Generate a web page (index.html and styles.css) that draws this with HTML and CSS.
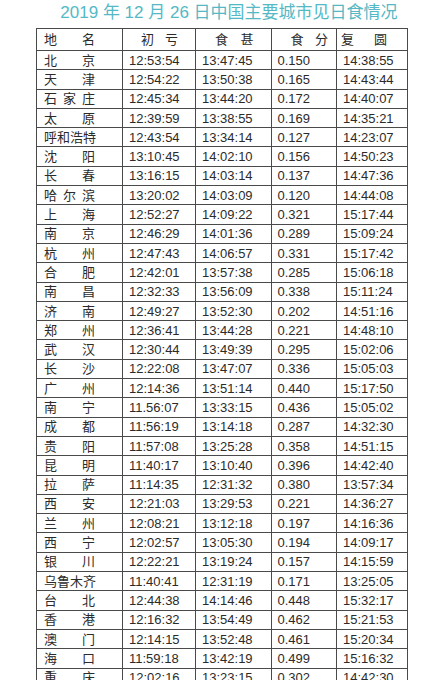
FILE: index.html
```html
<!DOCTYPE html>
<html lang="zh-CN">
<head>
<meta charset="utf-8">
<title>2019年12月26日中国主要城市见日食情况</title>
<link rel="stylesheet" href="styles.css">
</head>
<body>
<h1 class="title">2019 年 12 月 26 日中国主要城市见日食情况</h1>
<table class="eclipse">
<colgroup>
<col class="c-city">
<col class="c-t1">
<col class="c-t2">
<col class="c-mag">
<col class="c-t3">
</colgroup>
<thead>
<tr>
<th class="h-city"><span class="sp"><span>地</span><span>名</span></span></th>
<th class="h-c1"><span class="sp"><span>初</span><span>亏</span></span></th>
<th class="h-c2"><span class="sp"><span>食</span><span>甚</span></span></th>
<th class="h-c3"><span class="sp"><span>食</span><span>分</span></span></th>
<th class="h-c4"><span class="sp"><span>复</span><span>圆</span></span></th>
</tr>
</thead>
<tbody>
<tr><td class="city"><span class="sp"><span>北</span><span>京</span></span></td><td>12:53:54</td><td>13:47:45</td><td>0.150</td><td>14:38:55</td></tr>
<tr><td class="city"><span class="sp"><span>天</span><span>津</span></span></td><td>12:54:22</td><td>13:50:38</td><td>0.165</td><td>14:43:44</td></tr>
<tr><td class="city"><span class="sp"><span>石</span><span>家</span><span>庄</span></span></td><td>12:45:34</td><td>13:44:20</td><td>0.172</td><td>14:40:07</td></tr>
<tr><td class="city"><span class="sp"><span>太</span><span>原</span></span></td><td>12:39:59</td><td>13:38:55</td><td>0.169</td><td>14:35:21</td></tr>
<tr><td class="city"><span class="sp"><span>呼</span><span>和</span><span>浩</span><span>特</span></span></td><td>12:43:54</td><td>13:34:14</td><td>0.127</td><td>14:23:07</td></tr>
<tr><td class="city"><span class="sp"><span>沈</span><span>阳</span></span></td><td>13:10:45</td><td>14:02:10</td><td>0.156</td><td>14:50:23</td></tr>
<tr><td class="city"><span class="sp"><span>长</span><span>春</span></span></td><td>13:16:15</td><td>14:03:14</td><td>0.137</td><td>14:47:36</td></tr>
<tr><td class="city"><span class="sp"><span>哈</span><span>尔</span><span>滨</span></span></td><td>13:20:02</td><td>14:03:09</td><td>0.120</td><td>14:44:08</td></tr>
<tr><td class="city"><span class="sp"><span>上</span><span>海</span></span></td><td>12:52:27</td><td>14:09:22</td><td>0.321</td><td>15:17:44</td></tr>
<tr><td class="city"><span class="sp"><span>南</span><span>京</span></span></td><td>12:46:29</td><td>14:01:36</td><td>0.289</td><td>15:09:24</td></tr>
<tr><td class="city"><span class="sp"><span>杭</span><span>州</span></span></td><td>12:47:43</td><td>14:06:57</td><td>0.331</td><td>15:17:42</td></tr>
<tr><td class="city"><span class="sp"><span>合</span><span>肥</span></span></td><td>12:42:01</td><td>13:57:38</td><td>0.285</td><td>15:06:18</td></tr>
<tr><td class="city"><span class="sp"><span>南</span><span>昌</span></span></td><td>12:32:33</td><td>13:56:09</td><td>0.338</td><td>15:11:24</td></tr>
<tr><td class="city"><span class="sp"><span>济</span><span>南</span></span></td><td>12:49:27</td><td>13:52:30</td><td>0.202</td><td>14:51:16</td></tr>
<tr><td class="city"><span class="sp"><span>郑</span><span>州</span></span></td><td>12:36:41</td><td>13:44:28</td><td>0.221</td><td>14:48:10</td></tr>
<tr><td class="city"><span class="sp"><span>武</span><span>汉</span></span></td><td>12:30:44</td><td>13:49:39</td><td>0.295</td><td>15:02:06</td></tr>
<tr><td class="city"><span class="sp"><span>长</span><span>沙</span></span></td><td>12:22:08</td><td>13:47:07</td><td>0.336</td><td>15:05:03</td></tr>
<tr><td class="city"><span class="sp"><span>广</span><span>州</span></span></td><td>12:14:36</td><td>13:51:14</td><td>0.440</td><td>15:17:50</td></tr>
<tr><td class="city"><span class="sp"><span>南</span><span>宁</span></span></td><td>11.56:07</td><td>13:33:15</td><td>0.436</td><td>15:05:02</td></tr>
<tr><td class="city"><span class="sp"><span>成</span><span>都</span></span></td><td>11:56:19</td><td>13:14:18</td><td>0.287</td><td>14:32:30</td></tr>
<tr><td class="city"><span class="sp"><span>贵</span><span>阳</span></span></td><td>11:57:08</td><td>13:25:28</td><td>0.358</td><td>14:51:15</td></tr>
<tr><td class="city"><span class="sp"><span>昆</span><span>明</span></span></td><td>11:40:17</td><td>13:10:40</td><td>0.396</td><td>14:42:40</td></tr>
<tr><td class="city"><span class="sp"><span>拉</span><span>萨</span></span></td><td>11:14:35</td><td>12:31:32</td><td>0.380</td><td>13:57:34</td></tr>
<tr><td class="city"><span class="sp"><span>西</span><span>安</span></span></td><td>12:21:03</td><td>13:29:53</td><td>0.221</td><td>14:36:27</td></tr>
<tr><td class="city"><span class="sp"><span>兰</span><span>州</span></span></td><td>12:08:21</td><td>13:12:18</td><td>0.197</td><td>14:16:36</td></tr>
<tr><td class="city"><span class="sp"><span>西</span><span>宁</span></span></td><td>12:02:57</td><td>13:05:30</td><td>0.194</td><td>14:09:17</td></tr>
<tr><td class="city"><span class="sp"><span>银</span><span>川</span></span></td><td>12:22:21</td><td>13:19:24</td><td>0.157</td><td>14:15:59</td></tr>
<tr><td class="city"><span class="sp"><span>乌</span><span>鲁</span><span>木</span><span>齐</span></span></td><td>11:40:41</td><td>12:31:19</td><td>0.171</td><td>13:25:05</td></tr>
<tr><td class="city"><span class="sp"><span>台</span><span>北</span></span></td><td>12:44:38</td><td>14:14:46</td><td>0.448</td><td>15:32:17</td></tr>
<tr><td class="city"><span class="sp"><span>香</span><span>港</span></span></td><td>12:16:32</td><td>13:54:49</td><td>0.462</td><td>15:21:53</td></tr>
<tr><td class="city"><span class="sp"><span>澳</span><span>门</span></span></td><td>12:14:15</td><td>13:52:48</td><td>0.461</td><td>15:20:34</td></tr>
<tr><td class="city"><span class="sp"><span>海</span><span>口</span></span></td><td>11:59:18</td><td>13:42:19</td><td>0.499</td><td>15:16:32</td></tr>
<tr><td class="city"><span class="sp"><span>重</span><span>庆</span></span></td><td>12:02:16</td><td>13:23:15</td><td>0.302</td><td>14:42:30</td></tr>
</tbody>
</table>
</body>
</html>
```

FILE: styles.css
```css
html, body {
  margin: 0;
  padding: 0;
  background: #ffffff;
}

body {
  font-family: "Liberation Sans", "Noto Sans CJK SC", sans-serif;
  color: #2b2b2b;
}

.title {
  margin: 0;
  height: 28px;
  padding-left: 18px;
  font-family: "Liberation Sans", "Noto Sans CJK SC", sans-serif;
  font-size: 17px;
  font-weight: 400;
  line-height: 25px;
  text-align: center;
  color: #55b9c5;
  white-space: nowrap;
}

.eclipse {
  margin-left: 36px;
  width: 371px;
  border-collapse: collapse;
  table-layout: fixed;
  font-size: 13px;
}

.c-city { width: 86px; }
.c-t1 { width: 73px; }
.c-t2 { width: 75.5px; }
.c-mag { width: 65.5px; }
.c-t3 { width: 71px; }

.eclipse th,
.eclipse td {
  border: 1px solid #4a4a4a;
  padding: 0 0 0 6px;
  text-align: left;
  font-weight: 400;
  white-space: nowrap;
  line-height: 15px;
  overflow: hidden;
}

.eclipse th {
  height: 21px;
}

.eclipse td {
  height: 18.3px;
}

.sp {
  display: flex;
  justify-content: space-between;
}

.eclipse td.city {
  padding-left: 7px;
}

.eclipse td.city .sp {
  width: 51px;
}

.eclipse th.h-city { padding: 0 27px 0 7px; }
.eclipse th.h-c1 { padding: 0 17px 0 18px; }
.eclipse th.h-c2 { padding: 0 17px 0 19px; }
.eclipse th.h-c3 { padding: 0 8px 0 19px; }
.eclipse th.h-c4 { padding: 0 20px 0 4px; }
```
